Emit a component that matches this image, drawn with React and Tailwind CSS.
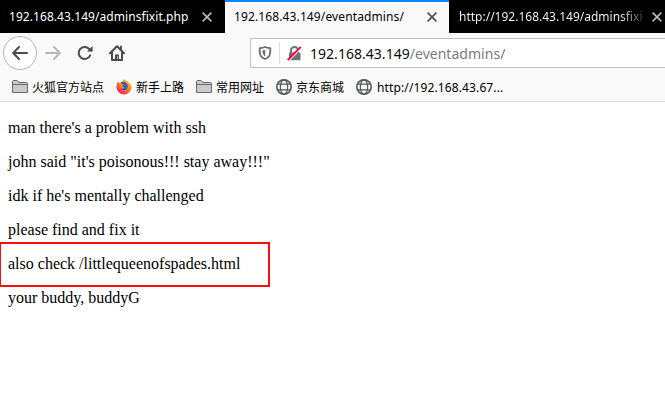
import React from "react";

function Close({ className }) {
  return (
    <svg className={`h-[10px] w-[10px] shrink-0 ${className}`} viewBox="0 0 10 10" fill="none" stroke="currentColor" strokeWidth="1.5">
      <path d="M.6.6l8.8 8.8M9.4.6L.6 9.4" />
    </svg>
  );
}

function Arrow({ className }) {
  return (
    <svg className={`h-4 w-4 ${className}`} viewBox="0 0 16 16" fill="none" stroke="currentColor" strokeWidth="2" strokeLinecap="round" strokeLinejoin="round">
      <path d="M15 8H1.5M7 2L1.2 8 7 14" />
    </svg>
  );
}

function Reload() {
  return (
    <svg className="h-4 w-4 text-[#4a4a4f]" viewBox="0 0 16 16" fill="none" stroke="currentColor" strokeWidth="2" strokeLinecap="round">
      <path d="M13.2 10.3A6 6 0 1 1 12 3.7L14 5.6" />
      <path d="M15.6 1v5.6H10z" fill="currentColor" stroke="none" />
    </svg>
  );
}

function Home() {
  return (
    <svg className="h-4 w-4 text-[#4a4a4f]" viewBox="0 0 16 16" fill="none" stroke="currentColor" strokeWidth="2" strokeLinecap="round" strokeLinejoin="round">
      <path d="M1 8.2L8 1.2l7 7M3 7.5V15h10V7.5" />
      <path d="M6 15v-5.5h4V15z" fill="currentColor" stroke="none" />
      <path d="M12 1.5V4" />
      <path d="M8.5 12v1" stroke="#f9f9fa" strokeWidth="1" />
    </svg>
  );
}

function Shield() {
  return (
    <svg className="h-[14px] w-[14px] text-[#6a6a6e]" viewBox="0 0 14 14" fill="none" stroke="currentColor" strokeWidth="1.8" strokeLinejoin="round">
      <path d="M7 1C5 1.8 3.2 2 1.7 2.2v3C1.7 9 3.6 11.8 7 13c3.4-1.2 5.3-4 5.3-7.8v-3C10.8 2 9 1.8 7 1z" />
      <path d="M7.2 4C6 4.3 5.2 4.4 4.4 4.5c0 2.9.8 4.8 2.8 5.9z" fill="currentColor" stroke="none" />
    </svg>
  );
}

function InsecureLock() {
  return (
    <svg className="h-[15px] w-[15px]" viewBox="0 0 15 15" fill="none">
      <path d="M4 7V4.5a3.5 3.5 0 0 1 7 0V7" stroke="#737373" strokeWidth="2" />
      <rect x="2" y="6.5" width="11.5" height="7.8" rx="1" fill="#737373" />
      <path d="M1.6 14.9L14.8 1.5" stroke="#ffffff" strokeWidth="1.2" />
      <path d="M.7 14L13.8.8" stroke="#f8083f" strokeWidth="1.9" />
    </svg>
  );
}

function Folder() {
  return (
    <svg className="h-4 w-4 shrink-0" viewBox="0 0 16 16" fill="#cbcbcd" stroke="#68686c">
      <path d="M.5 13.5V2.5q0-1 1-1h3.7l1.6 2h7.7q1 0 1 1v9z" />
      <path d="M.5 5.5h15" />
    </svg>
  );
}

function Globe() {
  return (
    <svg className="h-4 w-4 shrink-0" viewBox="0 0 16 16" fill="none" stroke="#55565a">
      <circle cx="8" cy="8" r="7.2" strokeWidth="1.6" />
      <ellipse cx="8" cy="8" rx="3.7" ry="7.2" strokeWidth="1.2" />
      <path d="M1.6 5.2h12.8M1.6 10.8h12.8" strokeWidth="1.3" />
    </svg>
  );
}

function Firefox() {
  return (
    <svg className="h-4 w-4 shrink-0" viewBox="0 0 16 16">
      <defs>
        <linearGradient id="flame" x1="1" y1="0" x2=".2" y2="1">
          <stop offset="0" stopColor="#ffe527" />
          <stop offset=".45" stopColor="#ff8a16" />
          <stop offset="1" stopColor="#f5156c" />
        </linearGradient>
      </defs>
      <path d="M2 2.5l1.2 1.4L5.5 3 8 .4c1 .9 3 1.3 4.5 2.9 2 1.7 3.2 3.2 3.1 5.4A7.6 7.6 0 0 1 .5 8.6C.4 6.5 1 4.2 2 2.5z" fill="url(#flame)" />
      <path d="M5 3.6C7.3 1.9 10.4 3 11.3 5.3c1.1 2.6-.1 6-3 6-1.7 0-2.7-.8-3.2-2 1.4.5 2.5 0 3.2-1-1.5 0-2.3-.5-2.1-1.4l1.5-1C6.5 5.5 5.4 5 5 3.6z" fill="#2865cc" />
      <path d="M2.8 4.3c1.2-.5 2.3-.2 3.1.7l1.8.6-1.6 1.2c-.2.9.6 1.4 2.2 1.5-.8 1.3-2 1.5-3.4.8C3.5 8.5 2.5 6.5 2.8 4.3z" fill="#ff8713" />
    </svg>
  );
}

function Bookmark({ icon, children, className = "" }) {
  return (
    <div className="flex items-center gap-1 whitespace-nowrap">
      {icon}
      <span className={`pt-[2px] ${className}`}>{children}</span>
    </div>
  );
}

export default function App() {
  return (
    <div className="flex h-[402px] w-[665px] flex-col overflow-hidden bg-white font-['Noto_Sans','Noto_Sans_CJK_SC',sans-serif] text-black">
      <div className="flex h-[33px] shrink-0 bg-black text-[12px] whitespace-nowrap">
        <div className="flex w-[225px] items-center pl-[9px] text-white">
          <span className="w-[193px] tracking-[0.005em]">192.168.43.149/adminsfixit.php</span>
          <Close className="text-[#bdbdbd]" />
        </div>
        <div className="flex w-[224px] items-center border-t-2 border-[#0a84ff] bg-[#f9f9fa] pb-[2px] pl-[9px]">
          <span className="w-[193px] tracking-[0.01em]">192.168.43.149/eventadmins/</span>
          <Close className="text-[#4a4a4f]" />
        </div>
        <div className="flex w-[216px] items-center pl-[10px] text-white">
          <span className="w-[193px] overflow-hidden bg-linear-to-r from-white from-83% to-transparent to-99% bg-clip-text text-transparent">http://192.168.43.149/adminsfixi</span>
          <Close className="text-[#bdbdbd]" />
        </div>
      </div>

      <div className="flex h-10 shrink-0 items-center bg-[#f9f9fa] pl-[3px]">
        <div className="flex h-[34px] w-[34px] items-center justify-center rounded-full border border-[#b5b5b7] bg-white">
          <Arrow className="text-[#4a4a4f]" />
        </div>
        <div className="flex gap-4 pl-2">
          <Arrow className="rotate-180 text-[#b7b7b9]" />
          <Reload />
          <Home />
        </div>
        <div className="ml-[125px] flex h-[30px] flex-1 items-center rounded-l-[2px] border border-r-0 border-[#bebec0] bg-white pl-[7px]">
          <Shield />
          <div className="mr-[7px] ml-[7px] h-[22px] w-px bg-[#dededf]" />
          <InsecureLock />
          <div className="ml-[8px] text-[14px] tracking-[0.002em] whitespace-nowrap text-[#7a7a7c]">
            <span className="text-[#0c0c0d]">192.168.43.149</span>/eventadmins/
          </div>
        </div>
      </div>

      <div className="flex h-[29px] shrink-0 items-center gap-3 border-b border-[#dedede] bg-[#f9f9fa] pl-3 text-[12px]">
        <Bookmark icon={<Folder />}>火狐官方站点</Bookmark>
        <Bookmark icon={<Firefox />}>新手上路</Bookmark>
        <Bookmark icon={<Folder />}>常用网址</Bookmark>
        <Bookmark icon={<Globe />}>京东商城</Bookmark>
        <Bookmark icon={<Globe />} className="pl-px tracking-[0.01em]">http://192.168.43.67...</Bookmark>
      </div>

      <main className="relative flex flex-1 flex-col gap-[17px] pt-[17px] pl-2 font-['Liberation_Serif',serif] text-[16px] leading-[17px] whitespace-nowrap">
        <p>man there's a problem with ssh</p>
        <p>john said "it's poisonous!!! stay away!!!"</p>
        <p>idk if he's mentally challenged</p>
        <p>please find and fix it</p>
        <p>also check /littlequeenofspades.html</p>
        <p>your buddy, buddyG</p>
        <div className="absolute top-[140px] left-[-1px] h-[45px] w-[271px] border-2 border-[#fb0d0d]" />
      </main>
    </div>
  );
}
